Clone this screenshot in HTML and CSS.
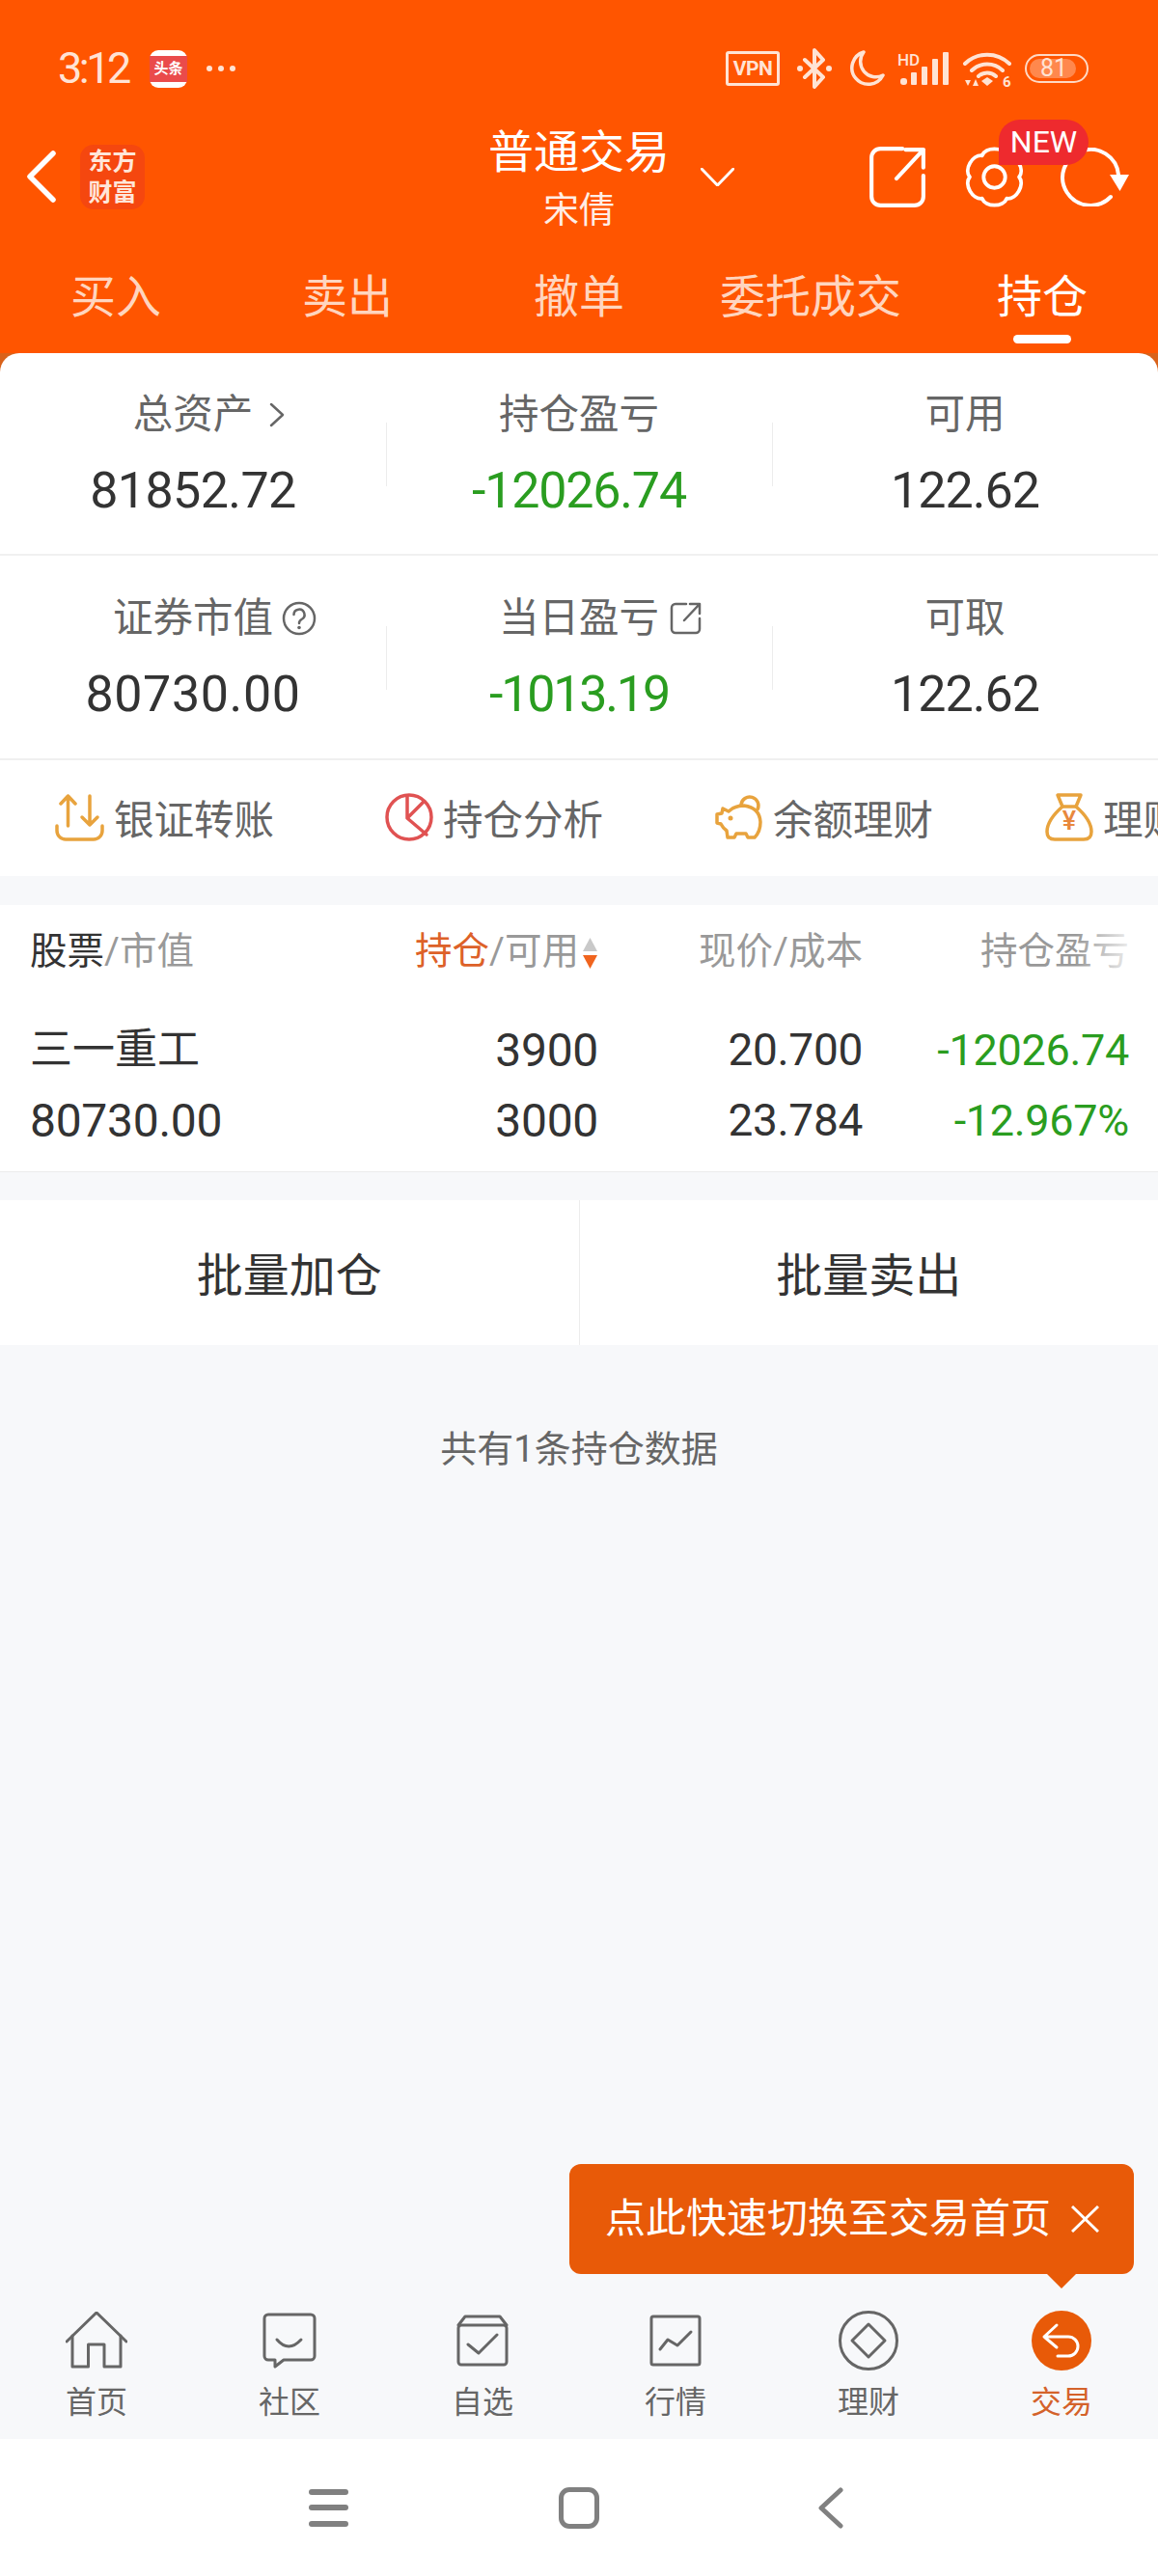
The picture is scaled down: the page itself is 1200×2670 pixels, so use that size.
FILE: index.html
```html
<!DOCTYPE html>
<html lang="zh">
<head>
    <meta charset="utf-8">
    <title>普通交易</title>
    <link rel="stylesheet" href="styles.css">
</head>
<body>
    <header class="top">
        <!-- Status bar -->
        <div class="status-bar">
            <span class="clock">3:12</span>
            <span class="news-app"><span class="news-band">头条</span></span>
            <span class="status-dots"><i></i><i></i><i></i></span>
            <span class="status-right">
                <span class="vpn">VPN</span>
                <svg class="line-icon bt" width="38" height="42" viewBox="0 0 38 42">
                    <path d="M9 12 L28 30 L19 40 V2 L28 12 L9 30"/>
                    <circle class="solid" cx="4" cy="21" r="3"/>
                    <circle class="solid" cx="34" cy="21" r="3"/>
                </svg>
                <svg class="line-icon moon" width="38" height="38" viewBox="0 0 38 38">
                    <path d="M16 2 A17 17 0 1 0 36 26 A16 16 0 0 1 16 2 Z"/>
                </svg>
                <svg class="signal" width="53" height="34" viewBox="0 0 53 34">
                    <text x="0" y="14" class="signal-hd">HD</text>
                    <rect x="3" y="27" width="7" height="7" rx="3"/>
                    <rect x="14" y="21" width="6" height="13" rx="1"/>
                    <rect x="25" y="15" width="6" height="19" rx="1"/>
                    <rect x="36" y="7" width="6" height="27" rx="1"/>
                    <rect x="47" y="0" width="6" height="34" rx="1"/>
                </svg>
                <svg class="wifi" width="50" height="39" viewBox="0 0 50 39">
                    <path class="wifi-arc" d="M2 14 A33 33 0 0 1 48 14"/>
                    <path class="wifi-arc" d="M9 21 A23 23 0 0 1 41 21"/>
                    <path class="wifi-arc" d="M16 27 A13 13 0 0 1 34 27"/>
                    <path d="M25 28 L31 32 L25 37 L19 32 Z"/>
                    <path d="M2 31 H8 L5 37 Z M10 37 H16 L13 30 Z"/>
                    <text x="41" y="38" class="wifi-six">6</text>
                </svg>
                <span class="battery"><span class="battery-fill"></span><span class="battery-num">81</span></span>
            </span>
        </div>

        <!-- Title row -->
        <div class="nav-row">
            <div class="nav-left">
                <svg class="line-icon back" width="30" height="54" viewBox="0 0 30 54">
                    <path d="M27 3 L3 27 L27 51"/>
                </svg>
                <span class="brand">东方<br>财富</span>
            </div>
            <div class="nav-title">
                <div class="nav-title-main">普通交易</div>
                <div class="nav-title-sub">宋倩</div>
            </div>
            <div class="nav-right">
                <svg class="line-icon caret" width="35" height="19" viewBox="0 0 35 19">
                    <path d="M1 1 L17.5 18 L34 1"/>
                </svg>
                <div class="nav-actions">
                    <svg class="line-icon" width="58" height="63" viewBox="1 1 56 61">
                        <path d="M34 3 H12 A9 9 0 0 0 3 12 V51 A9 9 0 0 0 12 60 H46 A9 9 0 0 0 55 51 V30"/>
                        <path d="M28 33 L55 4 M37 4 H55 V22"/>
                    </svg>
                    <span class="gear">
                        <svg class="line-icon gear-icon" width="65" height="63" viewBox="4 2 57 59">
                            <path d="M20.5 10.7 C24 2 41 2 44.5 10.7 C53.8 9.4 62.3 24.1 56.5 31.5 C62.3 38.9 53.8 53.6 44.5 52.3 C41 61 24 61 20.5 52.3 C11.2 53.6 2.7 38.9 8.5 31.5 C2.7 24.1 11.2 9.4 20.5 10.7 Z"/>
                            <circle cx="32.5" cy="31.5" r="10.500"/>
                        </svg>
                        <span class="new-badge">NEW</span>
                    </span>
                    <svg class="line-icon" width="71" height="61" viewBox="0 0 71 61">
                        <path d="M52 51 A29 29 0 1 1 60 28"/>
                        <polygon class="solid" points="51,28 71,28 61.5,45"/>
                    </svg>
                </div>
            </div>
        </div>

        <nav class="tabs">
            <a class="tab">买入</a>
            <a class="tab">卖出</a>
            <a class="tab">撤单</a>
            <a class="tab">委托成交</a>
            <a class="tab tab-active">持仓</a>
        </nav>
    </header>

    <!-- Account summary -->
    <section class="card-wrap">
        <div class="card">
            <div class="stats-row stats-row-first">
                <div class="stat">
                    <span class="stat-label">总资产
                        <svg class="stat-icon stat-chevron" width="16" height="26" viewBox="0 0 16 26"><path d="M2 2 L14 13 L2 24"/></svg>
                    </span>
                    <span class="stat-value">81852.72</span>
                </div>
                <div class="stat">
                    <span class="stat-label">持仓盈亏</span>
                    <span class="stat-value down">-12026.74</span>
                </div>
                <div class="stat">
                    <span class="stat-label">可用</span>
                    <span class="stat-value value-narrow">122.62</span>
                </div>
            </div>
            <div class="stats-row">
                <div class="stat">
                    <span class="stat-label">证券市值
                        <svg class="stat-icon stat-help" width="36" height="36" viewBox="0 0 36 36">
                            <circle cx="18" cy="18" r="16"/>
                            <path d="M12.5 14 A5.5 5.5 0 1 1 20.5 19 Q18 20.500 18 23"/>
                            <circle class="dot" cx="18" cy="27.500" r="1.800"/>
                        </svg>
                    </span>
                    <span class="stat-value value-wide">80730.00</span>
                </div>
                <div class="stat">
                    <span class="stat-label">当日盈亏
                        <svg class="stat-icon stat-link" width="33" height="34" viewBox="0 0 33 34">
                            <path d="M17 2 H6 A4 4 0 0 0 2 6 V28 A4 4 0 0 0 6 32 H27 A4 4 0 0 0 31 28 V17"/>
                            <path d="M15 19 L31 2 M21 2 H31 V12"/>
                        </svg>
                    </span>
                    <span class="stat-value down value-tight">-1013.19</span>
                </div>
                <div class="stat">
                    <span class="stat-label">可取</span>
                    <span class="stat-value value-narrow">122.62</span>
                </div>
            </div>

            <!-- Shortcuts, the last one runs off the screen -->
            <div class="shortcuts">
                <a class="shortcut">
                    <svg class="amber" width="51" height="49" viewBox="0 0 51 49">
                        <path d="M13.500 33 V2 M6 10 L13.500 2 L21 10"/>
                        <path d="M36 2 V32 M28 24 L36 32 L44 24"/>
                        <path d="M2 33 V38 A9 9 0 0 0 11 47 H40 A9 9 0 0 0 49 38 V33"/>
                    </svg>
                    银证转账
                </a>
                <a class="shortcut">
                    <svg class="pie" width="50" height="50" viewBox="0 0 50 50">
                        <circle cx="25" cy="25" r="23"/>
                        <path d="M23 3 V26 L43 43 M23 26 L40 9"/>
                    </svg>
                    持仓分析
                </a>
                <a class="shortcut">
                    <svg class="amber" width="50" height="50" viewBox="0 0 50 50">
                        <path d="M8 16 L14 19 Q20 13 30 13 Q46 15 47 30 Q47 40 41 46 H34 L32 42 H22 L20 46 H13 L12 39 Q8 36 6 32 L2 31 V22 L7 21 Z"/>
                        <path d="M27 12 A9 9 0 1 1 44 17"/>
                        <circle class="dot" cx="16" cy="26" r="2.500"/>
                    </svg>
                    余额理财
                </a>
                <a class="shortcut">
                    <svg class="amber" width="50" height="50" viewBox="0 0 50 50">
                        <path d="M13 2 H37 L32 14 H18 Z"/>
                        <path d="M18 14 Q2 28 2 40 Q2 48 10 48 H40 Q48 48 48 40 Q48 28 32 14"/>
                        <text x="25" y="38" class="yen">¥</text>
                    </svg>
                    理财产品
                </a>
            </div>
        </div>
    </section>

    <!-- Holdings table -->
    <section class="holdings">
        <div class="holdings-head">
            <span><span class="head-dark">股票</span>/市值</span>
            <span class="cell-right"><span class="head-active">持仓</span>/可用<svg class="sort" width="17" height="32" viewBox="0 0 17 32"><polygon class="sort-up" points="8.500,0 16,14 1,14"/><polygon class="sort-down" points="1,18 16,18 8.500,32"/></svg></span>
            <span class="cell-right">现价/成本</span>
            <span class="cell-right">持仓盈亏</span>
        </div>
        <div class="holdings-row">
            <span class="stock-name">三一重工</span>
            <span class="cell-right num-wide">3900</span>
            <span class="cell-right">20.700</span>
            <span class="cell-right down">-12026.74</span>
            <span class="num-wide">80730.00</span>
            <span class="cell-right num-wide">3000</span>
            <span class="cell-right">23.784</span>
            <span class="cell-right down">-12.967%</span>
        </div>
    </section>

    <div class="batch">
        <button class="batch-btn">批量加仓</button>
        <button class="batch-btn">批量卖出</button>
    </div>

    <main class="filler">
        <p class="count-note">共有1条持仓数据</p>
    </main>

    <!-- Bottom tabs -->
    <nav class="tabbar">
        <a class="tabbar-item">
            <span class="tabbar-icon">
                <svg width="64" height="60" viewBox="0 0 64 60">
                    <path d="M1 31 L32 1 L63 31"/>
                    <path d="M7 25 V57 H23.500 V34 H40 V57 H57 V25"/>
                </svg>
            </span>
            首页
        </a>
        <a class="tabbar-item">
            <span class="tabbar-icon">
                <svg width="56" height="58" viewBox="0 0 56 58">
                    <path d="M6 2 H50 A4 4 0 0 1 54 6 V45 A4 4 0 0 1 50 49 H22 L13 56 V49 H6 A4 4 0 0 1 2 45 V6 A4 4 0 0 1 6 2 Z"/>
                    <path d="M15 28 Q27 42 40 28"/>
                </svg>
            </span>
            社区
        </a>
        <a class="tabbar-item">
            <span class="tabbar-icon">
                <svg width="54" height="54" viewBox="0 0 54 54">
                    <rect x="2" y="11" width="50" height="41" rx="3"/>
                    <path d="M2 11 L9 2 H45 L52 11"/>
                    <path d="M12 31 L23 40 L42 21"/>
                </svg>
            </span>
            自选
        </a>
        <a class="tabbar-item">
            <span class="tabbar-icon">
                <svg width="54" height="54" viewBox="0 0 54 54">
                    <rect x="2" y="2" width="50" height="50" rx="2"/>
                    <path d="M11 36 L19 26 L29 32 L43 18"/>
                </svg>
            </span>
            行情
        </a>
        <a class="tabbar-item">
            <span class="tabbar-icon">
                <svg width="62" height="62" viewBox="0 0 62 62">
                    <circle cx="31" cy="31" r="29.500"/>
                    <path d="M31 14 L48 31 L31 48 L14 31 Z"/>
                </svg>
            </span>
            理财
        </a>
        <a class="tabbar-item tabbar-active">
            <span class="tabbar-icon">
                <svg width="62" height="62" viewBox="0 0 62 62">
                    <circle class="trade-disc" cx="31" cy="31" r="31"/>
                    <path class="trade-arrow" d="M26 15 L13 27 L26 38 M13 27 H38 A10 10 0 0 1 38 47 H27"/>
                </svg>
            </span>
            交易
        </a>
    </nav>

    <!-- Android navigation -->
    <div class="sys-nav">
        <span class="sys-key">
            <span class="sys-menu"><i></i><i></i><i></i></span>
        </span>
        <span class="sys-key"><span class="sys-home"></span></span>
        <span class="sys-key">
            <svg class="sys-back" width="27" height="43" viewBox="0 0 27 43"><path d="M24 3 L4 21.500 L24 40"/></svg>
        </span>
    </div>

    <!-- Tooltip over the trade tab -->
    <div class="tip">
        <span class="tip-text">点此快速切换至交易首页</span>
        <svg class="tip-close" width="29" height="28" viewBox="0 0 29 28"><path d="M1 1 L28 27 M28 1 L1 27"/></svg>
    </div>
</body>
</html>
```

FILE: styles.css
```css
* {
    box-sizing: border-box;
}
body {
    margin: 0;
    width: 1200px;
    height: 2670px;
    position: relative;
    overflow: hidden;
    display: flex;
    flex-direction: column;
    background: #f7f8fa;
    color: #333;
    font-family: "Roboto", "Noto Sans CJK SC", sans-serif;
}
.line-icon {
    display: block;
    flex: none;
    fill: none;
    stroke: #fff;
    stroke-width: 4;
    stroke-linecap: round;
    stroke-linejoin: round;
}
.line-icon .solid {
    fill: #fff;
    stroke: none;
}

/* Orange header */
.top {
    height: 366px;
    background: #ff5500;
    color: #fff;
}
.status-bar {
    height: 122px;
    padding: 20px 72px 0 60px;
    display: flex;
    align-items: center;
    color: #ffe3d4;
}
.clock {
    font-size: 45px;
    line-height: 50px;
    letter-spacing: -3.5px;
    width: 95px;
}
.news-app {
    width: 39px;
    height: 39px;
    border-radius: 9px;
    background: #fff;
    display: flex;
    align-items: center;
    margin-right: 20px;
}
.news-band {
    width: 100%;
    height: 27px;
    background: #ea4b4b;
    color: #fff;
    font-size: 15px;
    line-height: 27px;
    font-weight: 700;
    text-align: center;
}
.status-dots {
    display: flex;
    gap: 6px;
}
.status-dots i {
    width: 6px;
    height: 6px;
    border-radius: 50%;
    background: #ffe3d4;
}
.status-right {
    margin-left: auto;
    display: flex;
    align-items: center;
}
.vpn {
    width: 56px;
    height: 36px;
    border: 3px solid #ffe3d4;
    border-radius: 3px;
    font-size: 21px;
    font-weight: 700;
    line-height: 30px;
    text-align: center;
    letter-spacing: -0.5px;
}
.bt {
    margin-left: 17px;
    stroke: #ffe3d4;
    stroke-width: 4;
}
.bt .solid {
    fill: #ffe3d4;
}
.moon {
    margin-left: 16px;
    stroke: #ffe3d4;
    stroke-width: 3.5;
}
.signal {
    margin-left: 13px;
    fill: #ffe3d4;
    overflow: visible;
}
.signal-hd {
    font-size: 17px;
    font-weight: 500;
}
.wifi {
    margin-left: 15px;
    fill: #ffe3d4;
    overflow: visible;
}
.wifi-arc {
    fill: none;
    stroke: #ffe3d4;
    stroke-width: 4;
    stroke-linecap: round;
}
.wifi-six {
    font-size: 15px;
    font-weight: 700;
}
.battery {
    margin-left: 14px;
    width: 66px;
    height: 30px;
    border: 2.5px solid #ffd9c4;
    border-radius: 15px;
    position: relative;
    display: block;
}
.battery-fill {
    position: absolute;
    left: 3px;
    top: 3px;
    bottom: 3px;
    width: 48px;
    border-radius: 10px;
    background: rgba(255, 255, 255, 0.3);
}
.battery-num {
    position: absolute;
    left: 14px;
    top: -1px;
    font-size: 25px;
    line-height: 27px;
}

.nav-row {
    height: 122px;
    display: grid;
    grid-template-columns: 1fr auto 1fr;
    align-items: center;
}
.nav-left {
    display: flex;
    align-items: center;
    gap: 25px;
    padding-left: 28px;
}
.back {
    stroke-width: 5.5;
}
.brand {
    width: 67px;
    height: 67px;
    border-radius: 14px;
    background: #f5470f;
    color: #ffe6d9;
    font-size: 25px;
    font-weight: 700;
    line-height: 32px;
    text-align: center;
    padding-top: 2px;
}
.nav-title {
    width: 188px;
    text-align: center;
    margin-top: 3px;
}
.nav-title-main {
    font-size: 47px;
    line-height: 60px;
}
.nav-title-sub {
    margin-top: 8px;
    font-size: 37px;
    line-height: 46px;
    color: #ffeee5;
}
.nav-right {
    display: flex;
    align-items: center;
    padding: 0 30px 0 32px;
}
.caret {
    stroke-width: 3;
}
.nav-actions {
    margin-left: auto;
    display: flex;
    align-items: center;
    gap: 36px;
}
.gear {
    position: relative;
    display: block;
    margin-left: 3px;
}
.gear-icon {
    stroke-width: 3.6;
}
.new-badge {
    position: absolute;
    left: 37px;
    top: -28px;
    width: 93px;
    height: 47px;
    border-radius: 22px 24px 24px 0;
    background: #ee2a2e;
    color: #fff;
    font-size: 32px;
    line-height: 47px;
    text-align: center;
}
.tabs {
    display: flex;
    height: 122px;
}
.tab {
    flex: 1;
    position: relative;
    text-align: center;
    font-size: 47px;
    line-height: 128px;
    color: #ffd5bf;
}
.tab-active {
    color: #fff;
}
.tab-active::after {
    content: "";
    position: absolute;
    left: 90px;
    bottom: 10px;
    width: 60px;
    height: 9px;
    border-radius: 5px;
    background: #fff;
}

/* Summary card */
.card-wrap {
    background: #d9621a;
}
.card {
    background: #fff;
    border-radius: 20px 20px 0 0;
}
.stats-row {
    height: 212px;
    padding-top: 41px;
    display: grid;
    grid-template-columns: repeat(3, 1fr);
    border-bottom: 2px solid #f0f0f0;
}
.stats-row-first {
    height: 210px;
    padding-top: 40px;
}
.stat {
    position: relative;
    display: flex;
    flex-direction: column;
    align-items: center;
}
.stat + .stat::before {
    content: "";
    position: absolute;
    left: 0;
    top: 32px;
    width: 1px;
    height: 66px;
    background: #ececec;
}
.stat-label {
    position: relative;
    font-size: 41.500px;
    line-height: 48px;
    color: #666;
}
.stat-value {
    margin-top: 25px;
    font-size: 52px;
    line-height: 60px;
    letter-spacing: -0.6px;
    color: #333;
}
.value-narrow {
    letter-spacing: -1px;
}
.value-wide {
    letter-spacing: 0.6px;
}
.down {
    color: #2a9d20;
}
.stat-value.down {
    color: #2a9d20;
    letter-spacing: -1.2px;
}
.stat-value.value-tight {
    letter-spacing: -2.2px;
}
.stat-icon {
    position: absolute;
    top: 50%;
    transform: translateY(-50%);
    fill: none;
    stroke: #666;
    stroke-width: 2.500;
    stroke-linecap: round;
    stroke-linejoin: round;
}
.stat-icon .dot {
    fill: #666;
    stroke: none;
}
.stat-chevron {
    left: 141px;
}
.stat-help {
    left: 175px;
}
.stat-link {
    left: 177px;
}
.shortcuts {
    height: 120px;
    display: flex;
    overflow: hidden;
}
.shortcut {
    flex: 0 0 342px;
    padding: 0 0 2px 57px;
    display: flex;
    align-items: center;
    gap: 10px;
    font-size: 41.500px;
    color: #666;
    white-space: nowrap;
}
.shortcut svg {
    flex: none;
    fill: none;
    stroke-width: 3.500;
    stroke-linecap: round;
    stroke-linejoin: round;
}
.amber {
    stroke: #e8a33d;
}
.amber .dot {
    fill: #e8a33d;
    stroke: none;
}
.amber .yen {
    fill: #e8883d;
    stroke: none;
    font-size: 27px;
    font-weight: 500;
    text-anchor: middle;
}
.pie {
    stroke: #e05252;
}

/* Holdings */
.holdings {
    margin-top: 30px;
    background: #fff;
    border-bottom: 1px solid #ececec;
    height: 277px;
}
.holdings-head,
.holdings-row {
    display: grid;
    grid-template-columns: 301px 288px 274px 276px;
    padding: 0 29px 0 31px;
}
.holdings-head {
    height: 96px;
    position: relative;
    align-items: center;
    font-size: 38.500px;
    line-height: 50px;
    color: #999;
}
.holdings-head::after {
    content: "";
    position: absolute;
    right: 0;
    top: 0;
    bottom: 0;
    width: 85px;
    background: linear-gradient(to right, rgba(255, 255, 255, 0), #fff 80%);
}
.head-dark {
    color: #333;
}
.head-active {
    color: #dd6128;
}
.sort {
    margin-left: 3px;
    vertical-align: -5px;
}
.sort-up {
    fill: #c9c9c9;
}
.sort-down {
    fill: #f0641e;
}
.holdings-row {
    padding-top: 18px;
    font-size: 46px;
    line-height: 73px;
    letter-spacing: -0.3px;
    color: #333;
}
.holdings-row .down {
    font-size: 45px;
}
.num-wide {
    font-size: 48px;
}
.cell-right {
    text-align: right;
}
.stock-name {
    font-size: 44px;
    letter-spacing: 0;
}
.batch {
    margin-top: 29px;
    height: 150px;
    display: flex;
    background: #fff;
}
.batch-btn {
    flex: 1;
    border: 0;
    padding: 0 0 2px;
    background: none;
    color: #333;
    font-family: inherit;
    font-size: 48px;
}
.batch-btn + .batch-btn {
    border-left: 1px solid #ececec;
}
.filler {
    flex: 1;
}
.count-note {
    margin: 83px 0 0;
    text-align: center;
    font-size: 38px;
    line-height: 50px;
    color: #666;
}

/* Bottom tabs */
.tabbar {
    height: 140px;
    display: flex;
    background: #f7f8fa;
}
.tabbar-item {
    flex: 1;
    display: flex;
    flex-direction: column;
    align-items: center;
    font-size: 32px;
    line-height: 40px;
    color: #666;
}
.tabbar-icon {
    height: 72px;
    margin: 2px 0 8px;
    display: flex;
    align-items: center;
}
.tabbar-icon svg {
    fill: none;
    stroke: #666;
    stroke-width: 3;
    stroke-linejoin: round;
    stroke-linecap: round;
}
.tabbar-active {
    color: #d4622a;
}
.tabbar-icon .trade-disc {
    fill: #e85a08;
    stroke: none;
}
.tabbar-icon .trade-arrow {
    stroke: #fff;
}

/* System keys */
.sys-nav {
    height: 142px;
    background: #fff;
    display: flex;
    justify-content: center;
    align-items: center;
    gap: 200px;
}
.sys-key {
    width: 60px;
    display: flex;
    justify-content: center;
}
.sys-menu {
    width: 41px;
    height: 39px;
    display: flex;
    flex-direction: column;
    justify-content: space-between;
}
.sys-menu i {
    height: 6px;
    border-radius: 3px;
    background: #808080;
}
.sys-home {
    width: 42px;
    height: 43px;
    border: 5px solid #808080;
    border-radius: 11px;
}
.sys-back {
    fill: none;
    stroke: #808080;
    stroke-width: 5;
    stroke-linecap: round;
    stroke-linejoin: round;
}

/* Tooltip */
.tip {
    position: absolute;
    right: 25px;
    bottom: 313px;
    width: 585px;
    height: 114px;
    padding-left: 37px;
    border-radius: 12px;
    background: #e85a08;
    color: #fff;
    display: flex;
    align-items: center;
    gap: 21px;
}
.tip::after {
    content: "";
    position: absolute;
    left: 495px;
    top: 100%;
    border-left: 15px solid transparent;
    border-right: 15px solid transparent;
    border-top: 15px solid #e85a08;
}
.tip-text {
    font-size: 42px;
    line-height: 50px;
    white-space: nowrap;
}
.tip-close {
    fill: none;
    stroke: #fff;
    stroke-width: 3;
}
```
